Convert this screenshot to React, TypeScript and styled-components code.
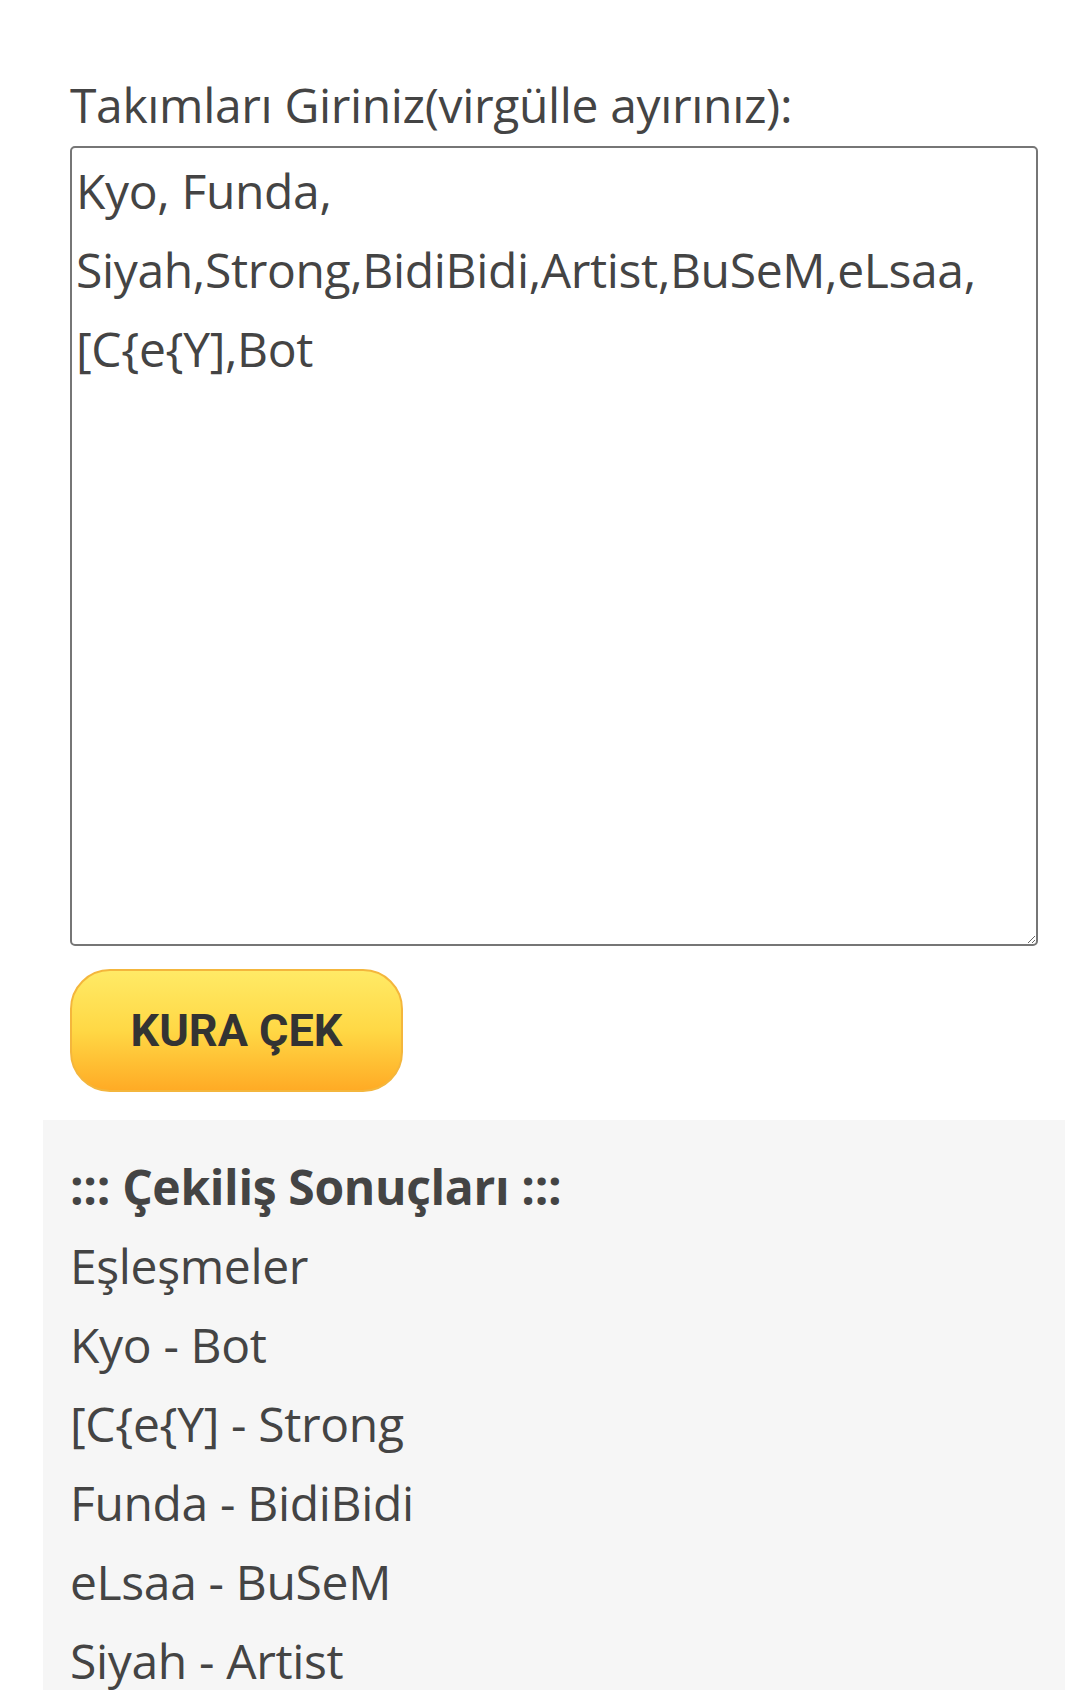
import React from "react";
import styled, { createGlobalStyle } from "styled-components";

const GlobalStyle = createGlobalStyle`
  html, body {
    margin: 0;
    padding: 0;
    background: #ffffff;
  }
  body {
    font-family: "Open Sans", "Liberation Sans", sans-serif;
    color: #444444;
  }
`;

const Page = styled.div`
  width: 1022px;
  margin-left: 43px;
  padding-top: 65px;
`;

const Form = styled.form`
  padding: 0 27px;
`;

const Label = styled.label`
  display: block;
  font-size: 48px;
  line-height: 79px;
  letter-spacing: -0.35px;
  color: #444444;
`;

const TeamsInput = styled.textarea`
  display: block;
  box-sizing: border-box;
  width: 968px;
  height: 800px;
  margin: 2px 0 0;
  padding: 3px 4px;
  border: 2px solid #767676;
  border-radius: 5px;
  font-family: "Open Sans", "Liberation Sans", sans-serif;
  font-size: 48px;
  line-height: 79px;
  letter-spacing: -0.35px;
  color: #444444;
  background: #ffffff;
  outline: none;
`;

const DrawButton = styled.button`
  display: flex;
  align-items: center;
  justify-content: center;
  box-sizing: border-box;
  width: 333px;
  height: 123px;
  margin-top: 23px;
  padding: 0;
  border: 2px solid #f4b63c;
  border-radius: 40px;
  background: linear-gradient(to bottom, #ffea66 0%, #ffd845 50%, #ffab25 100%);
  font-family: Roboto, "Liberation Sans", sans-serif;
  font-weight: 700;
  font-size: 45px;
  color: #333333;
  cursor: pointer;
`;

const Results = styled.section`
  margin-top: 28px;
  padding: 27px 27px;
  background: #f6f6f6;
`;

const Line = styled.div<{ $bold?: boolean }>`
  font-size: 48px;
  line-height: 79px;
  letter-spacing: -0.35px;
  font-weight: ${(p) => (p.$bold ? 700 : 400)};
  color: #444444;
  white-space: nowrap;
`;

const teams = "Kyo, Funda,\nSiyah,Strong,BidiBidi,Artist,BuSeM,eLsaa,\n[C{e{Y],Bot";

const pairs = [
  "Kyo - Bot",
  "[C{e{Y] - Strong",
  "Funda - BidiBidi",
  "eLsaa - BuSeM",
  "Siyah - Artist",
];

const App = () => {
  return (
    <>
      <GlobalStyle />
      <Page>
        <Form onSubmit={(e) => e.preventDefault()}>
          <Label htmlFor="teams">Takımları Giriniz(virgülle ayırınız):</Label>
          <TeamsInput id="teams" defaultValue={teams} spellCheck={false} />
          <DrawButton type="submit">KURA ÇEK</DrawButton>
        </Form>
        <Results>
          <Line $bold>::: Çekiliş Sonuçları :::</Line>
          <Line>Eşleşmeler</Line>
          {pairs.map((pair) => (
            <Line key={pair}>{pair}</Line>
          ))}
        </Results>
      </Page>
    </>
  );
};

export default App;
